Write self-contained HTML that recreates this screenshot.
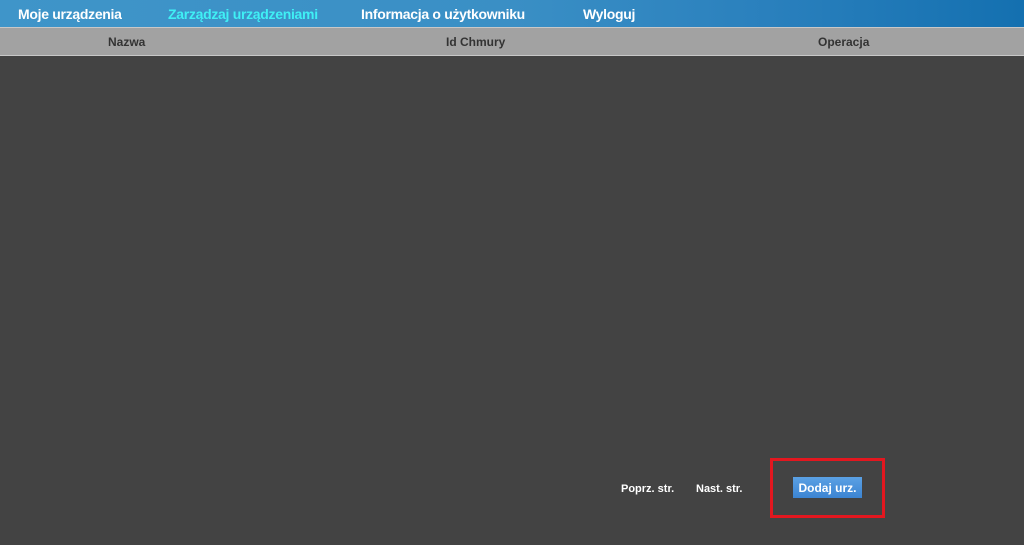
<!DOCTYPE html><html><head><style>
body{margin:0;width:1024px;height:545px;background:#434343;font-family:"Liberation Sans",sans-serif;position:relative;overflow:hidden}
.nav{position:absolute;left:0;top:0;width:1024px;height:27px;background:linear-gradient(90deg,#3f95c9 0%,#3a8fc5 50%,#2a80bd 75%,#1470b0 100%)}
.nav span{position:absolute;top:6px;font-size:14px;font-weight:bold;color:#fff;letter-spacing:-0.3px}
.hd{position:absolute;left:0;top:27px;width:1024px;height:27px;background:#a2a2a2;border-top:1px solid #c8c8c8;border-bottom:1px solid #c8c8c8}
.hd span{position:absolute;top:7px;font-size:12px;font-weight:bold;color:#333}
.t{position:absolute;font-size:11px;font-weight:bold;color:#fff}
.red{position:absolute;left:770px;top:458px;width:109px;height:54px;border:3px solid #e3171f}
.btn{position:absolute;left:793px;top:477px;width:69px;height:21px;background:linear-gradient(#5ba1e4,#3c84d2);color:#fff;font-size:12px;font-weight:bold;text-align:center;line-height:22px}
</style></head><body>
<div class="nav">
<span style="left:18px">Moje urządzenia</span>
<span style="left:168px;color:#3ff0f5">Zarządzaj urządzeniami</span>
<span style="left:361px">Informacja o użytkowniku</span>
<span style="left:583px">Wyloguj</span>
</div>
<div class="hd">
<span style="left:108px">Nazwa</span>
<span style="left:446px">Id Chmury</span>
<span style="left:818px">Operacja</span>
</div>
<div class="t" style="left:621px;top:483px">Poprz. str.</div>
<div class="t" style="left:696px;top:483px">Nast. str.</div>
<div class="red"></div>
<div class="btn">Dodaj urz.</div>
</body></html>
